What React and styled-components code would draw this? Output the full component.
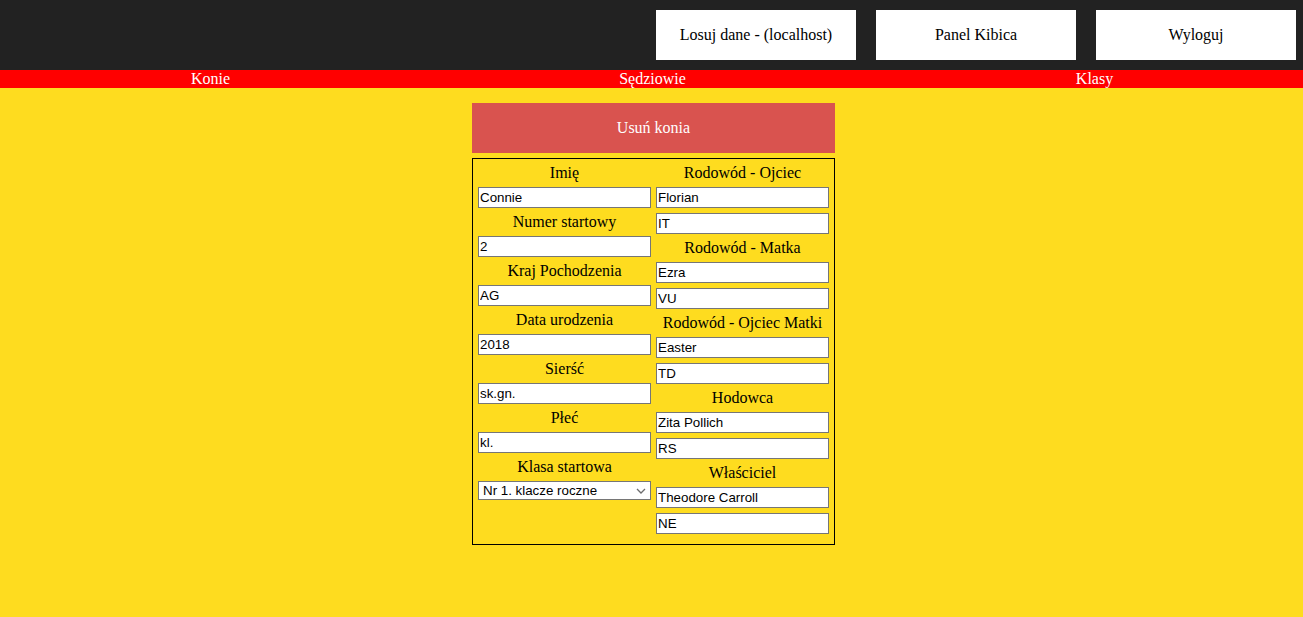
import React from "react";
import styled, { createGlobalStyle } from "styled-components";

const GlobalStyle = createGlobalStyle`
  html, body {
    margin: 0;
    padding: 0;
    background-color: #fedc1f;
    font-family: "Liberation Serif", "Times New Roman", serif;
    font-size: 16px;
  }
`;

const Header = styled.header`
  height: 70px;
  background-color: #222222;
  display: flex;
  justify-content: flex-end;
  align-items: flex-start;
  gap: 20px;
  padding: 10px 7px 0 0;
  box-sizing: border-box;
`;

const HeaderButton = styled.button`
  width: 200px;
  height: 50px;
  background-color: #fff;
  color: #000;
  border: none;
  font-family: "Liberation Serif", "Times New Roman", serif;
  font-size: 16px;
  cursor: pointer;
`;

const Nav = styled.nav`
  height: 18px;
  background-color: #ff0000;
  display: grid;
  grid-template-columns: repeat(3, 442px);
  justify-content: center;
  align-items: center;
  padding-left: 2px;
  overflow: hidden;
`;

const NavLink = styled.a`
  color: #fff;
  font-size: 16px;
  line-height: 18px;
  text-align: center;
  text-decoration: none;
  cursor: pointer;
`;

const Main = styled.main`
  display: flex;
  flex-direction: column;
  align-items: center;
  padding: 15px 0 0 4px;
`;

const DeleteButton = styled.button`
  width: 363px;
  height: 50px;
  background-color: #d9534f;
  color: #fff;
  border: none;
  font-family: "Liberation Serif", "Times New Roman", serif;
  font-size: 16px;
  cursor: pointer;
`;

const FormBox = styled.form`
  margin-top: 5px;
  width: 363px;
  box-sizing: border-box;
  border: 1px solid #000;
  padding: 5px 5px 10px 5px;
  display: grid;
  grid-template-columns: 173px 173px;
  column-gap: 5px;
  align-items: start;
`;

const Column = styled.div`
  display: flex;
  flex-direction: column;
  gap: 5px;
`;

const Label = styled.label`
  display: block;
  text-align: center;
  font-size: 16px;
  line-height: 18px;
  height: 18px;
  color: #000;
`;

const Input = styled.input`
  width: 100%;
  height: 21px;
  box-sizing: border-box;
  margin: 0;
  padding: 1px 1px;
  border: 1px solid #767676;
  background: #fff;
  color: #000;
  font-family: "Liberation Sans", Arial, sans-serif;
  font-size: 13.33px;
`;

const SelectWrap = styled.div`
  position: relative;
  height: 19px;
`;

const Select = styled.select`
  width: 100%;
  height: 19px;
  box-sizing: border-box;
  margin: 0;
  padding: 0 20px 0 4px;
  border: 1px solid #767676;
  border-radius: 0;
  appearance: none;
  -webkit-appearance: none;
  background: #fff;
  color: #000;
  font-family: "Liberation Sans", Arial, sans-serif;
  font-size: 13.33px;
`;

const Chevron = styled.svg`
  position: absolute;
  right: 5px;
  top: 7px;
  pointer-events: none;
`;

const leftFields = [
  ["Imię", "Connie"],
  ["Numer startowy", "2"],
  ["Kraj Pochodzenia", "AG"],
  ["Data urodzenia", "2018"],
  ["Sierść", "sk.gn."],
  ["Płeć", "kl."],
];

const rightFields = [
  ["Rodowód - Ojciec", "Florian", "IT"],
  ["Rodowód - Matka", "Ezra", "VU"],
  ["Rodowód - Ojciec Matki", "Easter", "TD"],
  ["Hodowca", "Zita Pollich", "RS"],
  ["Właściciel", "Theodore Carroll", "NE"],
];

const App = () => {
  return (
    <>
      <GlobalStyle />
      <Header>
        <HeaderButton>Losuj dane - (localhost)</HeaderButton>
        <HeaderButton>Panel Kibica</HeaderButton>
        <HeaderButton>Wyloguj</HeaderButton>
      </Header>
      <Nav>
        <NavLink>Konie</NavLink>
        <NavLink>Sędziowie</NavLink>
        <NavLink>Klasy</NavLink>
      </Nav>
      <Main>
        <DeleteButton>Usuń konia</DeleteButton>
        <FormBox onSubmit={(e) => e.preventDefault()}>
          <Column>
            {leftFields.map(([label, value]) => (
              <React.Fragment key={label}>
                <Label>{label}</Label>
                <Input defaultValue={value} />
              </React.Fragment>
            ))}
            <Label>Klasa startowa</Label>
            <SelectWrap>
              <Select defaultValue="1">
                <option value="1">Nr 1. klacze roczne</option>
                <option value="2">Nr 2. ogiery roczne</option>
              </Select>
              <Chevron width="10" height="6" viewBox="0 0 10 6">
                <path d="M1 1 L5 5 L9 1" fill="none" stroke="#6d6d6d" strokeWidth="1.3" />
              </Chevron>
            </SelectWrap>
          </Column>
          <Column>
            {rightFields.map(([label, name, country]) => (
              <React.Fragment key={label}>
                <Label>{label}</Label>
                <Input defaultValue={name} />
                <Input defaultValue={country} />
              </React.Fragment>
            ))}
          </Column>
        </FormBox>
      </Main>
    </>
  );
};

export default App;
